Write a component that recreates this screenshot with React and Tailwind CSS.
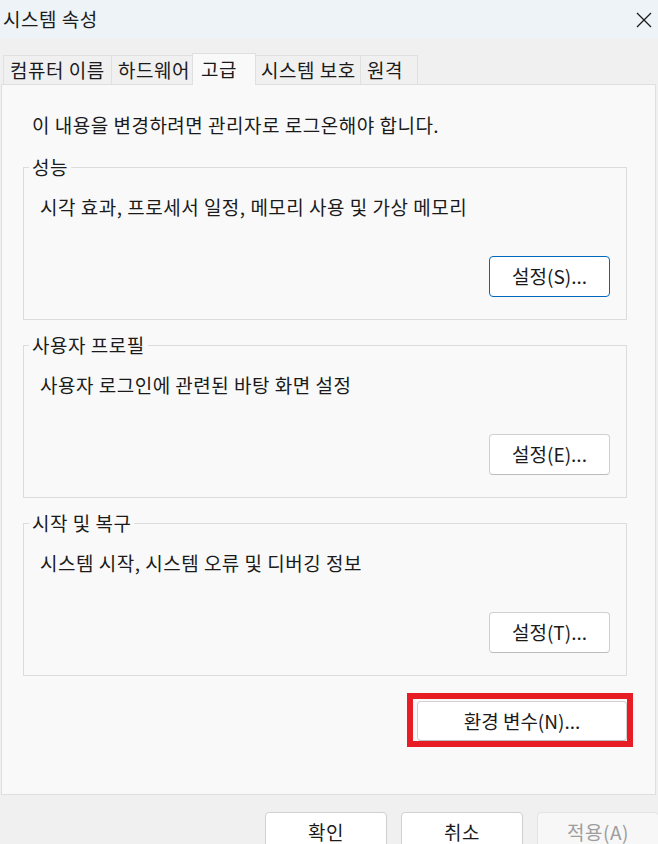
import React from 'react';

const tabs = [
  { label: '컴퓨터 이름', w: 'w-[108px]' },
  { label: '하드웨어', w: 'w-[83px]' },
  { label: '고급', w: 'w-[64px]', active: true },
  { label: '시스템 보호', w: 'w-[106px]' },
  { label: '원격', w: 'w-[58px]' },
];

const groups = [
  { title: '성능', text: '시각 효과, 프로세서 일정, 메모리 사용 및 가상 메모리', button: '설정(S)...', focused: true },
  { title: '사용자 프로필', text: '사용자 로그인에 관련된 바탕 화면 설정', button: '설정(E)...' },
  { title: '시작 및 복구', text: '시스템 시작, 시스템 오류 및 디버깅 정보', button: '설정(T)...' },
];

function Tab({ tab }) {
  if (tab.active) {
    return (
      <div className={`${tab.w} h-[32px] -mb-px -mx-[2px] relative z-10 bg-[#f9f9f9] border border-b-0 border-[#e0e0e0] pl-[8px] flex items-center whitespace-nowrap`}>
        {tab.label}
      </div>
    );
  }
  return (
    <div className={`${tab.w} h-[29px] bg-[#f0f0f0] border border-b-0 border-r-0 last:border-r border-[#e0e0e0] pl-[6px] flex items-center whitespace-nowrap`}>
      {tab.label}
    </div>
  );
}

function GroupBox({ group }) {
  return (
    <fieldset className="w-[604px] border border-[#dcdcdc] pl-[16px] pr-[16px] pb-[22px] mt-[13px] first:mt-[18px]">
      <legend className="-ml-[11px] px-[3px] leading-6">{group.title}</legend>
      <p className="mt-4 leading-6">{group.text}</p>
      <div className="flex justify-end mt-[37px]">
        <button
          className={`w-[121px] h-[41px] rounded-[4px] bg-white tracking-normal ${
            group.focused ? 'border border-[#0067c0]' : 'border border-[#d0d0d0] border-b-[#bcbcbc]'
          }`}
        >
          {group.button}
        </button>
      </div>
    </fieldset>
  );
}

export default function App() {
  return (
    <div
      className="w-[658px] h-[844px] overflow-hidden bg-[#f0f0f0] text-[19px] tracking-[0.5px] text-[#1b1b1b]"
      style={{ fontFamily: '"Noto Sans CJK KR", "Noto Sans", sans-serif' }}
    >
      {/* Title bar */}
      <div className="h-[38px] bg-[#eef3f8] flex items-center justify-between pl-[3px] pr-[6px]">
        <span className="leading-6">시스템 속성</span>
        <svg width="16" height="16" viewBox="0 0 16 16" className="mt-[1px]">
          <path d="M1 1 L15 15 M15 1 L1 15" stroke="#1b1b1b" strokeWidth="1.3" fill="none" />
        </svg>
      </div>

      {/* Tabs */}
      <div className="flex items-end pl-[3px] pt-[15px]">
        {tabs.map((t) => (
          <Tab key={t.label} tab={t} />
        ))}
      </div>

      {/* Panel */}
      <div className="ml-px w-[655px] h-[711px] border border-[#dfdfdf] bg-[#f9f9f9] pl-[21px] pt-[28px] flex flex-col">
        <p className="ml-[9px] leading-6">이 내용을 변경하려면 관리자로 로그온해야 합니다.</p>
        <div className="w-[604px] flex flex-col">
          {groups.map((g) => (
            <GroupBox key={g.title} group={g} />
          ))}
          <div className="self-end -mr-[6px] mt-[17px] border-[6px] border-[#e81c24] pl-[4px] pt-[2px] pb-0 pr-0">
            <button className="w-[210px] h-[40px] rounded-[4px] bg-white border border-[#d0d0d0] border-b-[#bcbcbc] tracking-normal">
              환경 변수(N)...
            </button>
          </div>
        </div>
      </div>

      {/* Dialog buttons */}
      <div className="flex gap-[14px] pl-[265px] mt-[17px]">
        <button className="w-[122px] h-[40px] shrink-0 rounded-[4px] bg-white border border-[#d0d0d0]">확인</button>
        <button className="w-[122px] h-[40px] shrink-0 rounded-[4px] bg-white border border-[#d0d0d0]">취소</button>
        <button className="w-[122px] h-[40px] shrink-0 rounded-[4px] bg-[#f7f7f7] border border-[#e3e3e3] text-[#9d9d9d]">
          적용(A)
        </button>
      </div>
    </div>
  );
}
